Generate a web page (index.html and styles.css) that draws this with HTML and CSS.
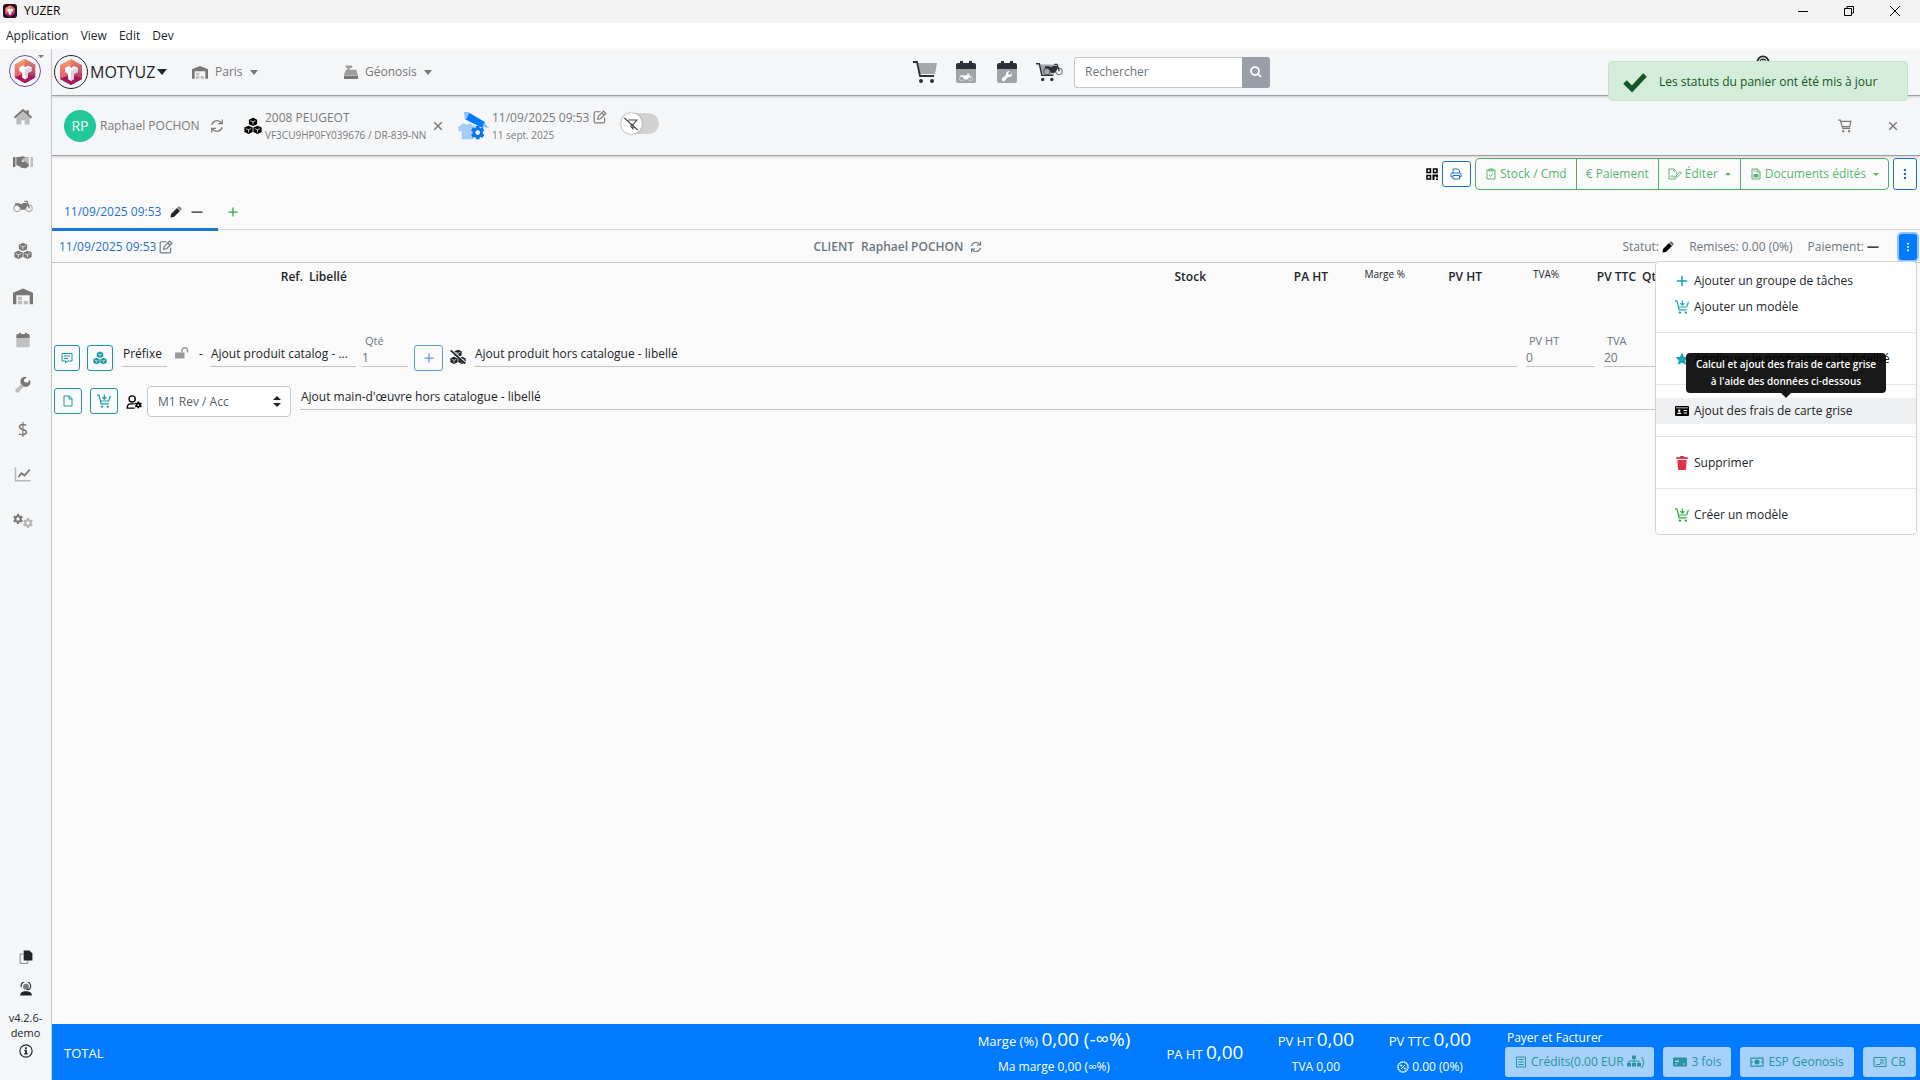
FILE: index.html
```
<!DOCTYPE html>
<html lang="fr">

<head>
    <meta charset="UTF-8">
    <meta name="viewport" content="width=device-width, initial-scale=1.0">
    <title>YUZER</title>
    <link rel="stylesheet" href="styles.css">
</head>

<body>
    <!-- icones -->
    <svg class="sprite" aria-hidden="true">
        <defs>
            <linearGradient id="g-left" x1="0" y1="0" x2="0" y2="1">
                <stop offset="0" stop-color="#f5a26f" />
                <stop offset="1" stop-color="#e0406c" />
            </linearGradient>
            <linearGradient id="g-right" x1="0" y1="0" x2="0" y2="1">
                <stop offset="0" stop-color="#f08a72" />
                <stop offset="1" stop-color="#8c1a63" />
            </linearGradient>
        </defs>
        <symbol id="i-logo" viewBox="0 0 32 32">
            <path d="M16 3l11 6v14l-11 6z" fill="url(#g-right)" />
            <path d="M16 3L5 9v14l11 6z" fill="url(#g-left)" />
            <path d="M5 23l11 6 11-6-11-5z" fill="#a31a5e" />
            <path d="M10 12l4-2 2 2 3-2 4 2v4l-4 2v5l-3 2-3-2v-5l-3-2z" fill="#fff" />
            <path d="M16 14l7-2v4l-4 2v5l-3 2z" fill="#dcd3dc" />
        </symbol>
        <symbol id="i-home" viewBox="0 0 24 24">
            <path d="M4 13l8-7 8 7v8h-6v-5h-4v5H4z" opacity=".45" />
            <path d="M12 2L1 12l1.600 1.800L12 5.500l9.400 8.300L23 12l-4-3.600V4h-3v1.700z" />
        </symbol>
        <symbol id="i-hands" viewBox="0 0 24 24">
            <path d="M0 6h3v12H0z" />
            <path d="M21 6h3v12h-3zM12 6l7 0v10l-3-2-5-4-3 1z" opacity=".45" />
            <path d="M4 6h4l3-1 4 1-4 3c-2 3 1 4 3 2l5 4c1 2-1 3-2 3-1 2-3 2-4 1-1 1-3 0-4-1L5 16H4z" />
        </symbol>
        <symbol id="i-moto" viewBox="0 0 30 20">
            <g fill="none" stroke="currentColor">
                <circle cx="6" cy="13.500" r="4.800" stroke-width="1.800" opacity=".6" />
                <circle cx="24" cy="13.500" r="4.800" stroke-width="1.800" opacity=".6" />
                <path d="M17 3h4l3.500 10.500" stroke-width="2" />
            </g>
            <path d="M3 6h6l3 1.500 3-2h6l1 3-4 7h-6l-2-4-4-2.500H3z" />
        </symbol>
        <symbol id="i-cubes" viewBox="0 0 24 24">
            <path d="M12 1l5.500 2.500v6L12 12 6.500 9.500v-6zM6 11.500l5.500 2.500v6L6 22.500.500 20v-6zM18 11.500l5.500 2.500v6L18 22.500 12.500 20v-6z" />
            <path d="M8.500 5l3.500 1.500L15.500 5M12 6.500V10M2.500 15.500L6 17l3.500-1.500M6 17v3.500M14.500 15.500L18 17l3.500-1.500M18 17v3.500" class="cube-line" />
        </symbol>
        <symbol id="i-warehouse" viewBox="0 0 24 20">
            <path d="M0 20V6l12-5 12 5v14h-4V9H4v11z" />
            <path d="M6 11h5v4H6zM6 16h5v4H6zM13 16h5v4h-5z" opacity=".45" />
        </symbol>
        <symbol id="i-calendar" viewBox="0 0 24 24">
            <path d="M2 9h20v12a2 2 0 0 1-2 2H4a2 2 0 0 1-2-2z" opacity=".42" />
            <path d="M2 9V5a2 2 0 0 1 2-2h2V1h3v2h6V1h3v2h2a2 2 0 0 1 2 2v4z" />
        </symbol>
        <symbol id="i-wrench" viewBox="0 0 24 24">
            <path d="M2 18l9-8 3 3-8 9a3 3 0 0 1-4-4z" opacity=".45" />
            <path d="M21 5l-3 4-4-1-1-3 4-3c-5-2-10 2-8 8l4 4c6 2 11-3 8-9z" />
        </symbol>
        <symbol id="i-wrench-solid" viewBox="0 0 24 24">
            <path d="M22 6l-4 4-3-1-1-3 4-4c-5-1-9 3-8 8l-8 7c-2 3 2 7 5 5l7-8c5 1 9-3 8-8z" />
        </symbol>
        <symbol id="i-chart" viewBox="0 0 24 24">
            <path d="M2 3v18h20" fill="none" stroke="currentColor" stroke-width="2" opacity=".5" />
            <path d="M6 16l4-5 4 3 7-8" fill="none" stroke="currentColor" stroke-width="2.500" />
        </symbol>
        <symbol id="i-gear" viewBox="0 0 24 24">
            <circle cx="12" cy="12" r="6.500" fill="none" stroke="currentColor" stroke-width="5" />
            <path d="M12 0v5M12 19v5M1.600 6l4.400 2.500M18 15.500l4.400 2.500M1.600 18L6 15.500M18 8.500L22.400 6" stroke="currentColor" stroke-width="5" />
        </symbol>
        <symbol id="i-copy" viewBox="0 0 24 24">
            <path d="M8 1h10l5 5v12H8z" />
            <path d="M8 7H2v16h13v-5" fill="none" stroke="currentColor" opacity=".6" stroke-width="1.500" />
        </symbol>
        <symbol id="i-agent" viewBox="0 0 24 24">
            <circle cx="12" cy="8" r="5" opacity=".6" />
            <path d="M4 9a8 8 0 1 1 13 4h-4" fill="none" stroke="currentColor" stroke-width="1.800" />
            <path d="M2 23c0-5 4-7 10-7s10 2 10 7z" />
        </symbol>
        <symbol id="i-info" viewBox="0 0 24 24">
            <circle cx="12" cy="12" r="10.500" fill="none" stroke="currentColor" stroke-width="2" />
            <path d="M10.500 5.500h3v3h-3zM9 10h4.500v6H15v2H9v-2h1.500v-4H9z" />
        </symbol>
        <symbol id="i-headset" viewBox="0 0 24 24">
            <circle cx="12" cy="12" r="11" />
            <path d="M5 12a7 7 0 0 1 14 0M8 10h8" fill="none" stroke="#f5f6f8" stroke-width="2" />
        </symbol>
        <symbol id="i-cart2" viewBox="0 0 24 22">
            <path d="M5 2h19l-2 11H7z" opacity=".4" />
            <path d="M0 1h4l3 14h14" fill="none" stroke="currentColor" stroke-width="1.800" />
            <circle cx="8" cy="20" r="2" />
            <circle cx="19" cy="20" r="2" />
        </symbol>
        <symbol id="i-cart" viewBox="0 0 24 24">
            <path d="M0 2h4l4 14h13M5 4h17l-2 9H8" fill="none" stroke="currentColor" stroke-width="2" />
            <circle cx="9" cy="21" r="2" />
            <circle cx="19" cy="21" r="2" />
        </symbol>
        <symbol id="i-cartplus" viewBox="0 0 24 24">
            <path d="M0 2h3.500L7 17h13M5 12h15l3-9M12.500 1v8M9 5.500l3.500 3.500L16 5.500" fill="none" stroke="currentColor" stroke-width="2" />
            <circle cx="8.500" cy="21.500" r="2" />
            <circle cx="18.500" cy="21.500" r="2" />
        </symbol>
        <symbol id="i-search" viewBox="0 0 24 24">
            <path d="M16 16l6 6M18 10a8 8 0 1 1-16 0 8 8 0 0 1 16 0z" fill="none" stroke="currentColor" stroke-width="3.500" />
        </symbol>
        <symbol id="i-sync" viewBox="0 0 24 24">
            <path d="M3 10a9.500 9.500 0 0 1 17-3M21 14a9.500 9.500 0 0 1-17 3M21 1v7h-7M3 23v-7h7" fill="none" stroke="currentColor" stroke-width="2.200" />
        </symbol>
        <symbol id="i-x" viewBox="0 0 24 24">
            <path d="M3 3l18 18M21 3L3 21" fill="none" stroke="currentColor" stroke-width="3.500" />
        </symbol>
        <symbol id="i-edit" viewBox="0 0 24 24">
            <path d="M13 3H4a2 2 0 0 0-2 2v15a2 2 0 0 0 2 2h14a2 2 0 0 0 2-2v-7M8 16l1-5 9-9 4 4-9 9zM15 5l4 4" fill="none" stroke="currentColor" stroke-width="2" />
        </symbol>
        <symbol id="i-work" viewBox="0 0 34 30">
            <path d="M8 0l5 1 17 10-3 6L9 8z" fill="#007bff" />
            <path d="M8 0l5 1-3 7-2-2zM29 11l5 6-7-1z" fill="#8dc3fb" />
            <path d="M1 16l6-4c2 2 5 2 7 0l6 4-3 5v8H5v-9l-3 1z" fill="#a3ccf9" />
            <path d="M22 15v14M16 18l12 8M28 18l-12 8" stroke="#0a74ee" stroke-width="4" />
            <circle cx="22" cy="22" r="4" fill="#f5f6f8" stroke="#0a74ee" stroke-width="3" />
        </symbol>
        <symbol id="i-nofilter" viewBox="0 0 24 24">
            <path d="M8 6h13l-6 7v6l-3-3v-4M2 3l20 18" fill="none" stroke="currentColor" stroke-width="1.600" />
        </symbol>
        <symbol id="i-qr" viewBox="0 0 24 24">
            <path d="M2 2h7v7H2zM15 2h7v7h-7zM2 15h7v7H2z" fill="none" stroke="currentColor" stroke-width="3" />
            <path d="M13 13h11v6h-4v-2h-3v7h-4zM20 21h4v3h-4z" />
        </symbol>
        <symbol id="i-print" viewBox="0 0 24 24">
            <path d="M6 10V2h10l3 3v5M5 18H2v-6c0-1 1-2 2-2h16c1 0 2 1 2 2v6h-3M6 15h13v7H6z" fill="none" stroke="currentColor" stroke-width="2" />
        </symbol>
        <symbol id="i-clip" viewBox="0 0 24 24">
            <path d="M4 4h16v18H4zM8 2h8v4H8zM8 14l3 3 5-6" fill="none" stroke="currentColor" stroke-width="2" />
        </symbol>
        <symbol id="i-sign" viewBox="0 0 28 24">
            <path d="M16 22H2V2h10l5 5v4M12 2v6M6 18c2-5 3-3 4 0h5M15 17l9-10 3 3-9 9z" fill="none" stroke="currentColor" stroke-width="2" />
        </symbol>
        <symbol id="i-doc" viewBox="0 0 24 24">
            <path d="M4 2h11l5 5v15H4zM14 2v6h6" fill="none" stroke="currentColor" stroke-width="2" />
            <path d="M7 12h10v7H7zM7 5h4v2H7z" />
        </symbol>
        <symbol id="i-file" viewBox="0 0 24 24">
            <path d="M4 2h11l5 5v15H4zM14 2v6h6" fill="none" stroke="currentColor" stroke-width="2" />
        </symbol>
        <symbol id="i-dots" viewBox="0 0 24 24">
            <circle cx="12" cy="4" r="2.500" />
            <circle cx="12" cy="12" r="2.500" />
            <circle cx="12" cy="20" r="2.500" />
        </symbol>
        <symbol id="i-pencil" viewBox="0 0 24 24">
            <path d="M1 23l1-7L14 4l6 6L8 22z" />
            <path d="M15 3l2-2c2-1 7 4 6 6l-2 2z" opacity=".6" />
        </symbol>
        <symbol id="i-minus" viewBox="0 0 24 24">
            <path d="M1 11h22v2.500H1z" />
        </symbol>
        <symbol id="i-plus" viewBox="0 0 24 24">
            <path d="M12 3v18M3 12h18" stroke="currentColor" stroke-width="2.500" />
        </symbol>
        <symbol id="i-comment" viewBox="0 0 24 24">
            <path d="M2 3h20v15h-8l-5 4v-4H2zM6 8h12M6 13h8" fill="none" stroke="currentColor" stroke-width="2" />
        </symbol>
        <symbol id="i-unlock" viewBox="0 0 28 24">
            <path d="M0 11h19v12H0z" />
            <path d="M14 11V7a5 5 0 0 1 11 0v4" fill="none" stroke="currentColor" stroke-width="3" />
        </symbol>
        <symbol id="i-usergear" viewBox="0 0 26 24">
            <path d="M15 7a5 5 0 1 1-10 0 5 5 0 0 1 10 0zM14 15H7c-4 0-5 3-5 7h12" fill="none" stroke="currentColor" stroke-width="2.200" />
            <path d="M20 11v11M15 14l10 5.500M25 14l-10 5.500" stroke="currentColor" stroke-width="3" />
            <circle cx="20" cy="17" r="4" />
            <circle cx="20" cy="17" r="1.500" fill="#fafafa" />
        </symbol>
        <symbol id="i-star" viewBox="0 0 24 24">
            <path d="M12 1l3.300 7 7.700 1-5.500 5.400L19 22l-7-3.700L5 22l1.500-7.600L1 9l7.700-1z" />
        </symbol>
        <symbol id="i-idcard" viewBox="0 0 28 24">
            <path d="M2 2h24a2 2 0 0 1 2 2v16a2 2 0 0 1-2 2H2a2 2 0 0 1-2-2V4a2 2 0 0 1 2-2z" />
            <path d="M2 5h24v1.500H2zM4 18c0-4 9-4 9 0zM6 11.500a2.500 2.500 0 1 0 5 0 2.500 2.500 0 0 0-5 0zM17 10h7v2h-7zM17 15h7v2h-7z" fill="#fff" />
        </symbol>
        <symbol id="i-trash" viewBox="0 0 24 24">
            <path d="M2 2h6l1-2h6l1 2h6v3H2zM4 7h16l-1 15a2 2 0 0 1-2 2H7a2 2 0 0 1-2-2z" />
        </symbol>
        <symbol id="i-check" viewBox="0 0 24 20">
            <path d="M2 10l7 7L22 3" fill="none" stroke="currentColor" stroke-width="5" />
        </symbol>
        <symbol id="i-register" viewBox="0 0 24 24">
            <path d="M3 1h11v4h-4v3h11l3 9H0l3-9h3V5H3z" opacity=".7" />
            <path d="M0 18h24v6H0z" />
        </symbol>
        <symbol id="i-badge" viewBox="0 0 24 24">
            <circle cx="12" cy="12" r="10" fill="none" stroke="currentColor" stroke-width="3" stroke-dasharray="3 1" />
            <path d="M8 16l8-8" stroke="currentColor" stroke-width="2" />
            <circle cx="8.500" cy="9" r="2" />
            <circle cx="15.500" cy="15" r="2" />
        </symbol>
        <symbol id="i-receipt" viewBox="0 0 24 24">
            <path d="M3 2h18v20H3zM7 7h10M7 12h10M7 17h10" fill="none" stroke="currentColor" stroke-width="2" />
        </symbol>
        <symbol id="i-tree" viewBox="0 0 28 24">
            <path d="M10 1h8v7h-8zM0 16h8v7H0zM10 16h8v7h-8zM20 16h8v7h-8z" />
            <path d="M14 8v8M4 16v-4h20v4" fill="none" stroke="currentColor" stroke-width="2" />
        </symbol>
        <symbol id="i-card" viewBox="0 0 28 24">
            <path d="M2 3h24a2 2 0 0 1 2 2v14a2 2 0 0 1-2 2H2a2 2 0 0 1-2-2V5a2 2 0 0 1 2-2zM4 9v3h8V9zM4 15v2h5v-2zM20 15v2h4v-2z" fill-rule="evenodd" />
        </symbol>
        <symbol id="i-cash" viewBox="0 0 28 24">
            <path d="M2 4h24v16H2z" fill="none" stroke="currentColor" stroke-width="2.500" />
            <circle cx="14" cy="12" r="5" />
            <path d="M4 10v4M24 10v4" stroke="currentColor" stroke-width="2" />
        </symbol>
        <symbol id="i-tpe" viewBox="0 0 28 24">
            <path d="M2 3h24v18H2zM6 17h8l2-5h4v5M14 8h9" fill="none" stroke="currentColor" stroke-width="2" />
        </symbol>
        <symbol id="i-slash" viewBox="0 0 24 24">
            <path d="M3 2l20 18" stroke="#fafafa" stroke-width="2" />
            <path d="M1 2l22 20" stroke="currentColor" stroke-width="2.500" />
        </symbol>
    </svg>

    <header class="titlebar">
        <span class="app-icon"><svg class="ic ic-14"><use href="#i-logo" /></svg></span>
        <span>YUZER</span>
        <div class="win-buttons">
            <button aria-label="Réduire"><svg viewBox="0 0 10 10"><path d="M0 5.500h10" /></svg></button>
            <button aria-label="Restaurer"><svg viewBox="0 0 10 10"><path d="M.5 2.500h7v7h-7zM3 2.500V.500h6.500V7H8" /></svg></button>
            <button aria-label="Fermer"><svg viewBox="0 0 10 10"><path d="M0 0l10 10M10 0L0 10" /></svg></button>
        </div>
    </header>

    <nav class="menubar">
        <a href="#">Application</a>
        <a href="#">View</a>
        <a href="#">Edit</a>
        <a href="#">Dev</a>
    </nav>

    <div class="app">
        <aside class="sidebar">
            <button class="logo" aria-label="Yuzer"><svg class="ic ic-32"><use href="#i-logo" /></svg><i class="caret"></i></button>
            <nav class="side-nav">
                <a href="#" aria-label="Accueil"><svg class="ic ic-20"><use href="#i-home" /></svg></a>
                <a href="#" aria-label="Clients"><svg class="ic ic-20"><use href="#i-hands" /></svg></a>
                <a href="#" aria-label="Véhicules"><svg class="ic ic-20"><use href="#i-moto" /></svg></a>
                <a href="#" aria-label="Produits"><svg class="ic ic-18"><use href="#i-cubes" /></svg></a>
                <a href="#" aria-label="Stock"><svg class="ic ic-20"><use href="#i-warehouse" /></svg></a>
                <a href="#" aria-label="Agenda"><svg class="ic ic-16"><use href="#i-calendar" /></svg></a>
                <a href="#" aria-label="Atelier"><svg class="ic ic-18"><use href="#i-wrench" /></svg></a>
                <a href="#" aria-label="Ventes" class="dollar">$</a>
                <a href="#" aria-label="Statistiques"><svg class="ic ic-18"><use href="#i-chart" /></svg></a>
                <a href="#" aria-label="Paramètres"><svg class="ic ic-10"><use href="#i-gear" /></svg><svg class="ic ic-10 pale"><use href="#i-gear" /></svg></a>
            </nav>
            <div class="side-foot">
                <svg class="ic ic-14"><use href="#i-copy" /></svg>
                <svg class="ic ic-14"><use href="#i-agent" /></svg>
                <span>v4.2.6-demo</span>
                <svg class="ic ic-14"><use href="#i-info" /></svg>
            </div>
        </aside>

        <div class="content">
            <header class="topbar">
                <button class="company"><span class="logo-ring"><svg class="ic ic-32"><use href="#i-logo" /></svg></span>MOTYUZ<i class="caret caret-lg"></i></button>
                <button class="site"><svg class="ic ic-16"><use href="#i-warehouse" /></svg>Paris<i class="caret"></i></button>
                <button class="till"><svg class="ic ic-14"><use href="#i-register" /></svg>Géonosis<i class="caret"></i></button>
                <div class="shortcuts">
                    <a href="#" aria-label="Panier"><svg class="ic ic-24"><use href="#i-cart2" /></svg></a>
                    <a href="#" aria-label="Agenda véhicules"><svg class="ic ic-24"><use href="#i-calendar" /></svg><svg class="ic ic-14 on-cal"><use href="#i-moto" /></svg></a>
                    <a href="#" aria-label="Agenda atelier"><svg class="ic ic-24"><use href="#i-calendar" /></svg><svg class="ic ic-12 on-cal"><use href="#i-wrench-solid" /></svg></a>
                    <a href="#" aria-label="Panier véhicule"><svg class="ic ic-20"><use href="#i-cart2" /></svg><svg class="ic ic-20 on-cart"><use href="#i-moto" /></svg></a>
                </div>
                <form class="search">
                    <input type="text" placeholder="Rechercher" aria-label="Rechercher">
                    <button type="button" aria-label="Lancer la recherche"><svg class="ic ic-12"><use href="#i-search" /></svg></button>
                </form>
                <a href="#" class="account" aria-label="Support"><svg class="ic ic-14"><use href="#i-headset" /></svg></a>
            </header>

            <section class="context">
                <span class="avatar">RP</span>
                <span class="client">Raphael POCHON</span>
                <svg class="ic ic-14 client-sync"><use href="#i-sync" /></svg>
                <svg class="ic ic-18 black"><use href="#i-cubes" /></svg>
                <div class="two-lines vehicle">
                    <span>2008 PEUGEOT</span>
                    <small>VF3CU9HP0FY039676 / DR-839-NN</small>
                </div>
                <button aria-label="Retirer le véhicule"><svg class="ic ic-10"><use href="#i-x" /></svg></button>
                <svg class="ic ic-32 work"><use href="#i-work" /></svg>
                <div class="two-lines">
                    <span>11/09/2025 09:53 <svg class="ic ic-14"><use href="#i-edit" /></svg></span>
                    <small>11 sept. 2025</small>
                </div>
                <label class="toggle">
                    <input type="checkbox" aria-label="Filtre">
                    <span class="knob"><svg class="ic ic-16"><use href="#i-nofilter" /></svg></span>
                </label>
                <div class="context-end">
                    <svg class="ic ic-14"><use href="#i-cart" /></svg>
                    <button aria-label="Fermer le panier"><svg class="ic ic-10"><use href="#i-x" /></svg></button>
                </div>
            </section>

            <main>
                <div class="toolbar">
                    <svg class="ic ic-12 black"><use href="#i-qr" /></svg>
                    <button class="btn btn-blue" aria-label="Imprimer"><svg class="ic ic-12"><use href="#i-print" /></svg></button>
                    <div class="btn-group">
                        <button><svg class="ic ic-12"><use href="#i-clip" /></svg>Stock / Cmd</button>
                        <button>€ Paiement</button>
                        <button><svg class="ic ic-14"><use href="#i-sign" /></svg>Éditer<i class="caret caret-sm"></i></button>
                        <button><svg class="ic ic-12"><use href="#i-doc" /></svg>Documents édités<i class="caret caret-sm"></i></button>
                    </div>
                    <button class="btn btn-blue btn-tall" aria-label="Plus"><svg class="ic ic-12"><use href="#i-dots" /></svg></button>
                </div>

                <div class="tabs">
                    <a href="#" class="tab">11/09/2025 09:53 <svg class="ic ic-12"><use href="#i-pencil" /></svg><svg class="ic ic-12"><use href="#i-minus" /></svg></a>
                    <button class="add-tab" aria-label="Ajouter un onglet"><svg class="ic ic-12"><use href="#i-plus" /></svg></button>
                </div>

                <div class="group-head">
                    <div class="gh-left"><a href="#">11/09/2025 09:53</a><svg class="ic ic-14"><use href="#i-edit" /></svg></div>
                    <div class="gh-client"><span>CLIENT</span><span>Raphael POCHON</span><svg class="ic ic-12"><use href="#i-sync" /></svg></div>
                    <div class="gh-right">
                        <span>Statut: <svg class="ic ic-12 black"><use href="#i-pencil" /></svg></span>
                        <span>Remises: 0.00 (0%)</span>
                        <span>Paiement: <svg class="ic ic-12 black"><use href="#i-minus" /></svg></span>
                        <div class="dropdown">
                            <button class="btn-more" aria-label="Actions" aria-expanded="true"><svg class="ic ic-10"><use href="#i-dots" /></svg></button>
                            <div class="menu">
                                <button><svg class="ic ic-14 teal"><use href="#i-plus" /></svg>Ajouter un groupe de tâches</button>
                                <button><svg class="ic ic-14 teal"><use href="#i-cartplus" /></svg>Ajouter un modèle</button>
                                <hr>
                                <button><svg class="ic ic-14 teal"><use href="#i-star" /></svg>Appliquer le programme de fidélité</button>
                                <hr>
                                <button class="active"><svg class="ic ic-14 black"><use href="#i-idcard" /></svg>Ajout des frais de carte grise
                                    <span class="tooltip" role="tooltip">Calcul et ajout des frais de carte grise<br>à l'aide des données ci-dessous</span>
                                </button>
                                <hr>
                                <button><svg class="ic ic-14 red"><use href="#i-trash" /></svg>Supprimer</button>
                                <hr>
                                <button><svg class="ic ic-14 green"><use href="#i-cartplus" /></svg>Créer un modèle</button>
                            </div>
                        </div>
                    </div>
                </div>

                <table class="lines">
                    <thead>
                        <tr>
                            <th class="c-ref">Ref.</th>
                            <th class="c-lib">Libellé</th>
                            <th class="c-stock">Stock</th>
                            <th class="c-pa">PA HT</th>
                            <th class="c-num small">Marge %</th>
                            <th class="c-num">PV HT</th>
                            <th class="c-num small">TVA%</th>
                            <th class="c-num">PV TTC</th>
                            <th class="c-qty">Qté</th>
                        </tr>
                    </thead>
                </table>

                <div class="entry">
                    <button class="btn btn-teal w-26" aria-label="Commentaire"><svg class="ic ic-12"><use href="#i-comment" /></svg></button>
                    <button class="btn btn-teal w-26 sep" aria-label="Produits"><svg class="ic ic-14"><use href="#i-cubes" /></svg></button>
                    <input class="field f-prefix" type="text" placeholder="Préfixe" aria-label="Préfixe">
                    <svg class="ic ic-14 lock"><use href="#i-unlock" /></svg>
                    <span class="dash">-</span>
                    <input class="field f-catalog" type="text" placeholder="Ajout produit catalog - ..." aria-label="Ajout produit catalogue">
                    <label class="labelled f-qty">Qté<input class="field" type="text" value="1"></label>
                    <button class="btn btn-light" aria-label="Ajouter"><svg class="ic ic-12"><use href="#i-plus" /></svg></button>
                    <span class="stack"><svg class="ic ic-16"><use href="#i-cubes" /></svg><svg class="ic ic-16 over"><use href="#i-slash" /></svg></span>
                    <input class="field f-grow" type="text" placeholder="Ajout produit hors catalogue - libellé" aria-label="Ajout produit hors catalogue">
                    <label class="labelled f-price">PV HT<input class="field" type="text" value="0"></label>
                    <label class="labelled f-price">TVA<input class="field" type="text" value="20"></label>
                    <label class="labelled f-total">PV TTC<input class="field" type="text" value="0"></label>
                    <button class="btn btn-teal row-end" aria-label="Valider le produit"></button>
                </div>

                <div class="entry entry-labour">
                    <button class="btn btn-teal w-28" aria-label="Document"><svg class="ic ic-12"><use href="#i-file" /></svg></button>
                    <button class="btn btn-teal w-28" aria-label="Modèle"><svg class="ic ic-14"><use href="#i-cartplus" /></svg></button>
                    <svg class="ic ic-16 black user"><use href="#i-usergear" /></svg>
                    <span class="select">
                        <select aria-label="Taux">
                            <option>M1 Rev / Acc</option>
                        </select>
                    </span>
                    <input class="field f-grow" type="text" placeholder="Ajout main-d'œuvre hors catalogue - libellé" aria-label="Ajout main-d'œuvre">
                    <button class="btn btn-teal row-end" aria-label="Valider la main-d'œuvre"></button>
                </div>
            </main>

            <footer class="totals">
                <span class="total-title">TOTAL</span>
                <div class="total t-marge"><span class="main">Marge (%) <b>0,00 (-∞%)</b></span><span>Ma marge 0,00 (∞%)</span></div>
                <div class="total t-pa"><span class="main">PA HT <b>0,00</b></span></div>
                <div class="total t-pv"><span class="main">PV HT <b>0,00</b></span><span>TVA 0,00</span></div>
                <div class="total t-ttc"><span class="main">PV TTC <b>0,00</b></span><span><svg class="ic ic-12"><use href="#i-badge" /></svg> 0.00 (0%)</span></div>
                <div class="pay">
                    <span>Payer et Facturer</span>
                    <div class="pay-buttons">
                        <button disabled><svg class="ic ic-12"><use href="#i-receipt" /></svg><span>Crédits(0.00 EUR <svg class="ic ic-14"><use href="#i-tree" /></svg>)</span></button>
                        <button disabled><svg class="ic ic-14"><use href="#i-card" /></svg>3 fois</button>
                        <button disabled><svg class="ic ic-14"><use href="#i-cash" /></svg>ESP Geonosis</button>
                        <button disabled><svg class="ic ic-14"><use href="#i-tpe" /></svg>CB</button>
                    </div>
                </div>
            </footer>
        </div>
    </div>

    <div class="toast" role="status"><svg class="ic ic-24"><use href="#i-check" /></svg>Les statuts du panier ont été mis à jour</div>
</body>

</html>
```
FILE: styles.css
```
* {
    box-sizing: border-box;
}

body {
    margin: 0;
    height: 100vh;
    display: flex;
    flex-direction: column;
    font-family: "Open Sans", "Noto Sans", sans-serif;
    font-size: 12px;
    line-height: 18px;
    color: #212529;
    background-color: #fafafa;
    overflow: hidden;
}

button,
input,
select {
    font: inherit;
    color: inherit;
}

button {
    display: flex;
    align-items: center;
    justify-content: center;
    padding: 0;
    border: none;
    background: none;
    white-space: nowrap;
}

a {
    color: inherit;
    text-decoration: none;
}

.sprite {
    position: absolute;
    width: 0;
    height: 0;
}

/* icones */
.ic {
    flex: none;
    fill: currentColor;
    vertical-align: -2px;
}

.ic-10 { width: 10px; height: 10px; }
.ic-12 { width: 12px; height: 12px; }
.ic-14 { width: 14px; height: 14px; }
.ic-16 { width: 16px; height: 16px; }
.ic-18 { width: 18px; height: 18px; }
.ic-20 { width: 20px; height: 20px; }
.ic-24 { width: 24px; height: 24px; }
.ic-32 { width: 32px; height: 32px; }

.cube-line {
    fill: none;
    stroke: #fafafa;
    stroke-width: 1;
}

.black { color: #000; }
.teal { color: #17a2b8; }
.red { color: #dc3545; }
.green { color: #28a745; }

.caret {
    border: 4px solid transparent;
    border-top: 5px solid currentColor;
    border-bottom: 0;
}

.caret-lg {
    border-width: 6px 5px 0;
}

.caret-sm {
    border-width: 3px 3px 0;
}

/* fenetre */
.titlebar {
    flex: none;
    display: flex;
    align-items: center;
    gap: 7px;
    height: 23px;
    padding: 0 2px 1px 3px;
    color: #000;
    background-color: #f3f3f3;
}

.app-icon {
    display: flex;
    border-radius: 3px;
    background-color: #2a0d22;
}

.win-buttons {
    display: flex;
    margin-left: auto;
}

.win-buttons button {
    width: 46px;
    height: 20px;
}

.win-buttons svg {
    width: 10px;
    height: 10px;
    fill: none;
    stroke: #000;
    overflow: visible;
}

.menubar {
    flex: none;
    display: flex;
    align-items: center;
    gap: 12px;
    height: 26px;
    padding-left: 6px;
    background-color: #fff;
}

.app {
    flex: 1;
    display: flex;
    min-height: 0;
}

/* barre laterale */
.sidebar {
    flex: none;
    display: flex;
    flex-direction: column;
    width: 52px;
    background-color: #f5f6f8;
    border-right: 1px solid #c4c6c8;
    color: #777;
}

.logo {
    align-items: flex-start;
    height: 46px;
    padding: 6px 0 0 9px;
    justify-content: flex-start;
}

.logo .ic {
    border: 1px solid #6a4fb0;
    border-radius: 50%;
}

.logo .caret {
    margin-left: -3px;
    border-width: 3px 3px 0;
}

.side-nav {
    display: flex;
    flex-direction: column;
    height: 446px;
    padding-right: 5px;
}

.side-nav a {
    flex: 1;
    display: flex;
    align-items: center;
    justify-content: center;
}

.side-nav .dollar {
    font-size: 18px;
}

.side-nav .pale {
    margin-top: 8px;
    opacity: .5;
}

.side-foot {
    display: flex;
    flex-direction: column;
    align-items: center;
    margin-top: auto;
    padding-bottom: 22px;
    font-size: 11px;
    line-height: 15px;
    text-align: center;
    color: #212529;
}

.side-foot .ic {
    margin-bottom: 18px;
}

.side-foot .ic + .ic {
    margin-bottom: 14px;
}

.side-foot .ic:last-child {
    margin: 4px 0 0;
}

.side-foot span {
    width: 44px;
}

.content {
    flex: 1;
    display: flex;
    flex-direction: column;
    min-width: 0;
}

/* barre du haut */
.topbar {
    flex: none;
    display: flex;
    align-items: center;
    height: 47px;
    background-color: #f5f6f8;
    border-bottom: 1px solid #9ea0a3;
    box-shadow: 0 1px 2px #c8cacc;
    color: #777;
    z-index: 1;
}

.company {
    width: 136px;
    padding-left: 2px;
    justify-content: flex-start;
    gap: 2px;
    font-size: 16px;
    color: #212529;
}

.logo-ring {
    display: flex;
    border: 1px solid #212529;
    border-radius: 50%;
}

.site,
.till {
    justify-content: flex-start;
    gap: 7px;
}

.site {
    width: 156px;
    padding-left: 4px;
}

.till {
    width: 569px;
}

.shortcuts {
    display: flex;
    align-items: center;
    gap: 17px;
    width: 161px;
    color: #2b3138;
}

.shortcuts a {
    display: flex;
    justify-content: center;
    position: relative;
}

/* petit picto pose sur le calendrier ou le panier */
.on-cal {
    position: absolute;
    top: 10px;
    color: #fff;
}

.on-cart {
    position: absolute;
    top: -3px;
    left: 7px;
}

.search {
    display: flex;
    height: 31px;
}

.search input {
    width: 168px;
    padding: 0 10px;
    border: 1px solid #c3c7cc;
    border-right: none;
    border-radius: 3px 0 0 3px;
    background-color: #fff;
}

.search input::placeholder {
    color: #6c757d;
}

.search button {
    width: 28px;
    border-radius: 0 3px 3px 0;
    background-color: #9a9ea8;
    color: #fff;
}

.account {
    align-self: flex-start;
    margin: 5px 150px 0 auto;
    color: #212529;
}

/* client et vehicule */
.context {
    flex: none;
    display: flex;
    align-items: center;
    height: 60px;
    padding: 0 22px 0 12px;
    background-color: #f5f6f8;
    border-bottom: 1px solid #9ea0a3;
    box-shadow: 0 1px 2px #c8cacc;
    color: #7a7a7a;
}

.avatar {
    display: flex;
    align-items: center;
    justify-content: center;
    width: 32px;
    height: 32px;
    margin-right: 4px;
    border-radius: 50%;
    font-size: 14px;
    color: #fff;
    background-color: #20c997;
}

.client {
    width: 110px;
    white-space: nowrap;
}

.client-sync {
    margin-right: 20px;
}

.two-lines {
    display: flex;
    flex-direction: column;
    margin-left: 3px;
    white-space: nowrap;
}

.two-lines small {
    font-size: 10px;
    line-height: 16px;
}

.vehicle {
    width: 168px;
}

.work {
    margin-left: 14px;
}

.toggle {
    display: flex;
    width: 38px;
    height: 21px;
    margin: 0 0 4px 14px;
    border-radius: 11px;
    background-color: #d2d2d2;
}

.toggle input {
    position: absolute;
    opacity: 0;
}

.knob {
    display: flex;
    align-items: center;
    justify-content: center;
    width: 21px;
    height: 21px;
    border-radius: 50%;
    background-color: #fff;
    box-shadow: 0 0 2px #777;
    color: #444;
}

.context-end {
    display: flex;
    align-items: center;
    gap: 36px;
    margin-left: auto;
}

main {
    flex: 1;
    min-height: 0;
}

/* actions */
.btn {
    flex: none;
    height: 26px;
    border: 1px solid;
    border-radius: 3px;
}

.btn-blue {
    width: 29px;
    color: #1a73d2;
    background-color: #fff;
}

.btn-tall {
    width: 24px;
    height: 32px;
}

.btn-teal {
    color: #1a97a5;
}

.btn-light {
    width: 29px;
    color: #5b9bd8;
}

.toolbar {
    display: flex;
    justify-content: flex-end;
    align-items: center;
    gap: 4px;
    padding: 2px 3px 0;
}

.btn-group {
    display: flex;
    height: 32px;
    border: 1px solid #4dab62;
    border-radius: 4px;
    color: #5cb472;
}

.btn-group button {
    gap: 3px;
    padding: 0 9px;
}

.btn-group button + button {
    border-left: 1px solid #4dab62;
}

.btn-group .caret {
    margin-left: 4px;
}

.tabs {
    display: flex;
    height: 40px;
    border-bottom: 1px solid #d5d7da;
}

.tab {
    display: flex;
    align-items: center;
    gap: 9px;
    height: 41px;
    padding: 6px 15px 0 12px;
    border-bottom: 3px solid #1976d2;
    color: #2571cf;
}

.tab .ic {
    color: #212529;
}

.add-tab {
    padding: 4px 0 0 9px;
    color: #28a745;
}

.group-head {
    display: flex;
    align-items: center;
    justify-content: space-between;
    height: 33px;
    padding: 1px 3px 0 7px;
    border-bottom: 1px solid #c4c7cc;
    color: #6c757d;
}

.gh-left,
.gh-client,
.gh-right {
    display: flex;
    align-items: center;
}

.gh-left {
    gap: 3px;
}

.gh-left a {
    color: #2571cf;
}

.gh-client {
    gap: 7px;
    font-weight: 600;
}

.gh-right {
    gap: 15px;
}

.gh-right > .dropdown {
    margin-left: 5px;
}

.dropdown {
    position: relative;
}

.btn-more {
    width: 18px;
    height: 26px;
    border-radius: 3px;
    color: #fff;
    background-color: #007bff;
    box-shadow: 0 0 0 2px #8fc3fb;
}

.menu {
    position: absolute;
    top: 27px;
    right: 0;
    width: 262px;
    padding: 6px 0;
    border: 1px solid #d0d2d4;
    border-radius: 4px;
    background-color: #fff;
    z-index: 2;
}

.menu button {
    position: relative;
    justify-content: flex-start;
    gap: 5px;
    width: 100%;
    height: 26px;
    padding-left: 19px;
    color: #212529;
}

.menu .active {
    background-color: #eff0f1;
}

.menu hr {
    margin: 12px 0 13px;
    border: none;
    border-top: 1px solid #e3e5e8;
}

.tooltip {
    position: absolute;
    bottom: 31px;
    left: 30px;
    width: 200px;
    padding: 3px 0;
    border-radius: 4px;
    font-size: 10px;
    font-weight: 600;
    line-height: 17px;
    text-align: center;
    color: #fff;
    background-color: rgba(0, 0, 0, 0.9);
}

.tooltip::after {
    content: "";
    position: absolute;
    top: 100%;
    left: 50%;
    margin-left: -5px;
    border: 5px solid transparent;
    border-top-color: rgba(0, 0, 0, 0.9);
    border-bottom: 0;
}

/* lignes */
.lines {
    width: 100%;
    table-layout: fixed;
    border-collapse: collapse;
}

.lines th {
    height: 66px;
    padding: 5px 3px 0;
    font-weight: 600;
    text-align: right;
    vertical-align: top;
}

.lines .small {
    padding-top: 2px;
    font-size: 10px;
    font-weight: 400;
}

.c-ref { width: 254px; }
.c-stock { width: 120px; }
.c-pa { width: 122px; }
.c-num { width: 77px; }
.c-qty { width: 281px; }

.lines .c-lib,
.lines .c-qty {
    text-align: left;
}

.entry {
    display: flex;
    align-items: flex-end;
    height: 42px;
    padding: 0 3px 0 2px;
}

.entry-labour {
    height: 46px;
}

.w-26 {
    width: 26px;
    margin-right: 7px;
}

.w-28 {
    width: 28px;
    margin-right: 8px;
}

.sep {
    margin-right: 9px;
}

.field {
    width: 100%;
    min-width: 0;
    height: 28px;
    margin-bottom: 4px;
    padding: 2px 0 0 1px;
    border: none;
    border-bottom: 1px solid #c0c4ca;
    border-radius: 0;
    background: none;
    text-overflow: ellipsis;
}

.field::placeholder {
    color: #212529;
}

.f-prefix {
    width: 45px;
    margin-right: 8px;
}

.f-catalog {
    width: 146px;
    margin-right: 6px;
}

.f-grow {
    flex: 1;
    margin-right: 9px;
}

.lock {
    margin: 0 10px 11px 0;
    color: #9a9a9a;
}

.dash {
    width: 11px;
    margin-bottom: 8px;
}

.labelled {
    flex: none;
    font-size: 11px;
    line-height: 14px;
    text-indent: 3px;
    color: #6c757d;
}

.labelled .field {
    display: block;
    height: 19px;
    padding: 0;
    font-size: 12px;
    text-indent: 0;
}

.f-qty {
    width: 46px;
    margin-right: 6px;
}

.f-price {
    width: 69px;
    margin-right: 9px;
}

.f-total {
    width: 200px;
    margin-right: 9px;
}

.stack {
    position: relative;
    display: flex;
    margin: 0 8px 6px 7px;
}

.over {
    position: absolute;
    top: 0;
    left: 0;
}

.row-end {
    width: 26px;
    height: 24px;
    margin-bottom: 3px;
}

.entry-labour .btn {
    margin-bottom: 3px;
}

.entry-labour .row-end {
    align-self: flex-start;
    margin-top: 5px;
}

.entry-labour .field {
    margin-bottom: 7px;
}

.user {
    margin: 0 5px 7px 0;
}

.select {
    position: relative;
    flex: none;
    width: 144px;
    margin-right: 9px;
}

.select select {
    width: 100%;
    height: 31px;
    padding: 0 10px;
    border: 1px solid #c3c7cc;
    border-radius: 4px;
    appearance: none;
    color: #5a6169;
    background-color: #fff;
}

.select::before,
.select::after {
    content: "";
    position: absolute;
    right: 10px;
    border: 4px solid transparent;
}

.select::before {
    top: 10px;
    border-top: 0;
    border-bottom-color: #212529;
}

.select::after {
    top: 17px;
    border-bottom: 0;
    border-top-color: #212529;
}

/* totaux */
.totals {
    flex: none;
    display: flex;
    align-items: center;
    height: 56px;
    padding: 2px 4px 0 12px;
    color: #fff;
    background-color: #007bff;
}

.total-title {
    flex: 1;
    font-size: 13px;
}

.total {
    display: flex;
    flex-direction: column;
    align-items: center;
    line-height: 26px;
    white-space: nowrap;
}

.total .main {
    font-size: 13px;
}

.total b {
    font-size: 19px;
    font-weight: 400;
}

.t-marge { width: 154px; margin-right: 38px; }
.t-pa { width: 72px; margin-right: 38px; }
.t-pv { width: 74px; margin-right: 38px; }
.t-ttc { width: 78px; margin-right: 36px; }

.pay > span {
    padding-left: 2px;
}

.pay-buttons {
    display: flex;
    gap: 9px;
}

.pay-buttons button {
    gap: 4px;
    height: 30px;
    padding: 0 10px;
    border-radius: 3px;
    color: #2b93a0;
    background-color: #a6d1fb;
}

/* notification */
.toast {
    position: fixed;
    top: 61px;
    right: 12px;
    display: flex;
    align-items: center;
    gap: 12px;
    width: 300px;
    height: 40px;
    padding: 2px 14px 0;
    border: 1px solid #c3e6cb;
    border-radius: 4px;
    white-space: nowrap;
    color: #155724;
    background-color: #d4edda;
    z-index: 3;
}
```
